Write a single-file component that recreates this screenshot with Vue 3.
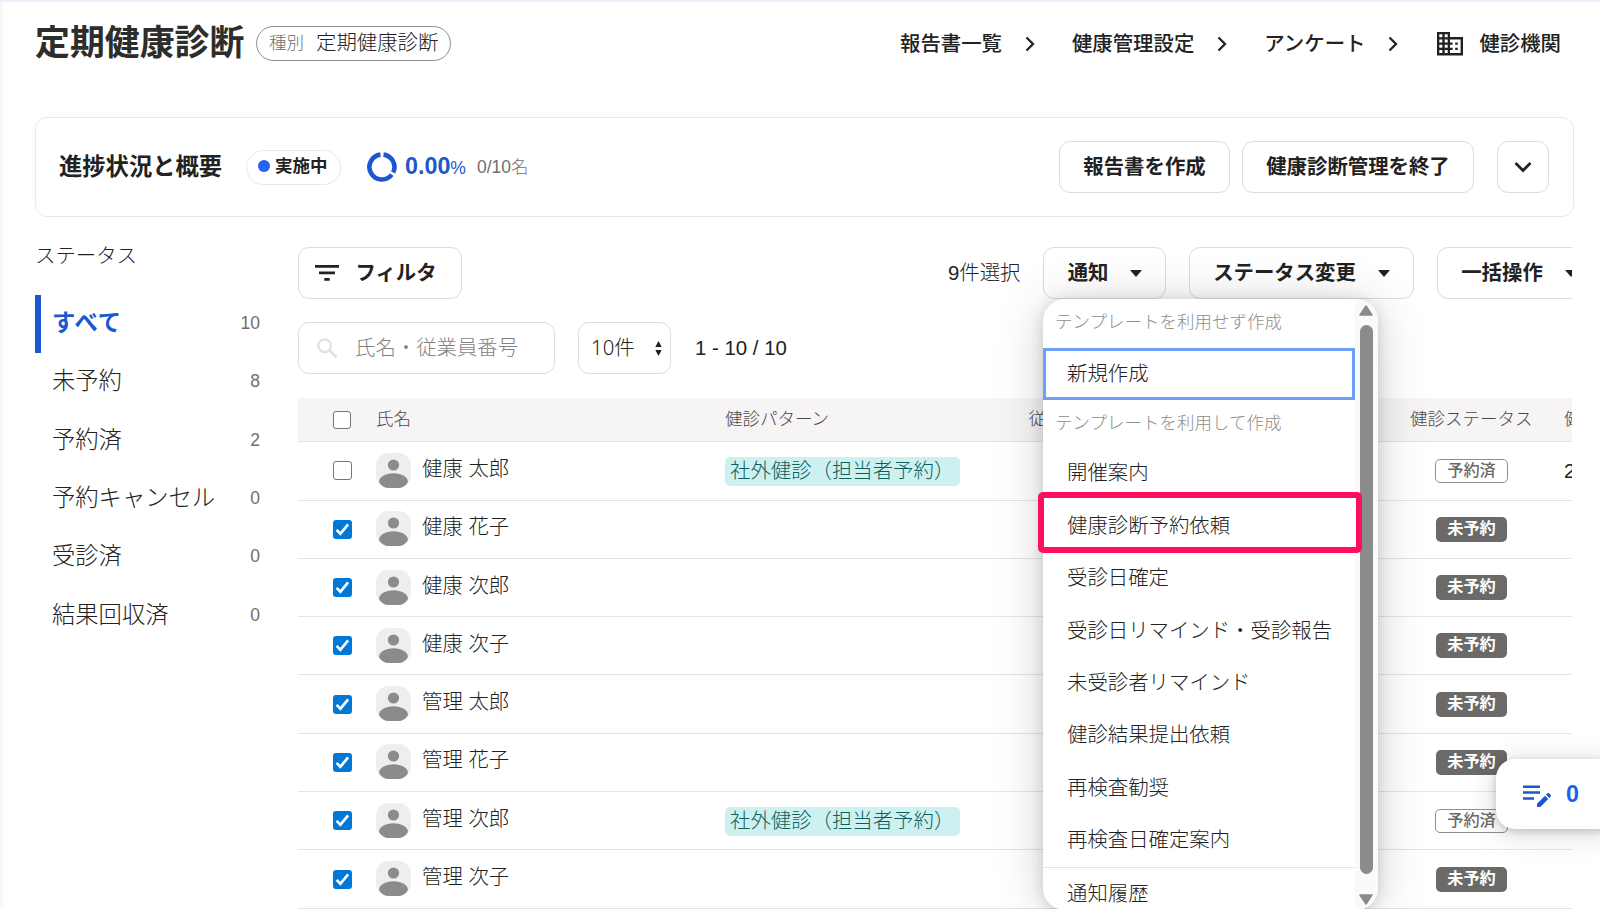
<script setup>
const nav = ['報告書一覧', '健康管理設定', 'アンケート']
const statuses = [
  { name: 'すべて', count: 10, active: true },
  { name: '未予約', count: 8 },
  { name: '予約済', count: 2 },
  { name: '予約キャンセル', count: 0 },
  { name: '受診済', count: 0 },
  { name: '結果回収済', count: 0 },
]
const pattern = '社外健診（担当者予約）'
const rows = [
  { name: '健康 太郎', checked: false, pattern, status: '予約済', date: '2' },
  { name: '健康 花子', checked: true, status: '未予約' },
  { name: '健康 次郎', checked: true, status: '未予約' },
  { name: '健康 次子', checked: true, status: '未予約' },
  { name: '管理 太郎', checked: true, status: '未予約' },
  { name: '管理 花子', checked: true, status: '未予約' },
  { name: '管理 次郎', checked: true, pattern, status: '予約済' },
  { name: '管理 次子', checked: true, status: '未予約' },
]
const templates = [
  '開催案内',
  '健康診断予約依頼',
  '受診日確定',
  '受診日リマインド・受診報告',
  '未受診者リマインド',
  '健診結果提出依頼',
  '再検査勧奨',
  '再検査日確定案内',
]
</script>

<template>
  <div class="page">
    <header class="header">
      <h1>定期健康診断</h1>
      <div class="kind"><span class="kind-label">種別</span><span>定期健康診断</span></div>
      <nav class="nav">
        <a v-for="n in nav" :key="n" class="nav-item">
          <span>{{ n }}</span>
          <svg width="10" height="16" viewBox="0 0 10 16"><path d="M1.5 1.5 8 8l-6.500 6.500" fill="none" stroke="#222" stroke-width="2.300" /></svg>
        </a>
        <a class="nav-item clinic">
          <svg width="26" height="24" viewBox="0 0 26 24">
            <path fill="#222" fill-rule="evenodd" d="M0 0h13v5h13v18.500H0zM2.300 2.300v3h3v-3zm5.400 0v3h3v-3zM2.300 7.400v3h3v-3zm5.400 0v3h3v-3zM2.300 12.700v3h3v-3zm5.400 0v3h3v-3zM2.300 18v3h3v-3zm5.400 0v3h3v-3zM13 7.400v3h2.600v2.300H13V15.700h2.600V18H13v3h10.600V7.400zM18.200 10.400h2.600v2.300h-2.600zm0 5.300h2.600V18h-2.600z" />
          </svg>
          <span>健診機関</span>
        </a>
      </nav>
    </header>

    <section class="summary">
      <h2>進捗状況と概要</h2>
      <div class="state"><i class="dot"></i>実施中</div>
      <svg class="donut" width="30" height="30" viewBox="0 0 30 30">
        <g fill="none" stroke="#1d57d0" stroke-width="4.600">
          <path d="M16.500 2.600A12.500 12.500 0 0 1 26.200 20.400" />
          <path d="M24.800 22.700A12.500 12.500 0 1 1 13.500 2.600" />
        </g>
      </svg>
      <div class="rate"><b>0.00</b><span>%</span></div>
      <div class="people">0/10名</div>
      <div class="actions">
        <button class="btn report">報告書を作成</button>
        <button class="btn finish">健康診断管理を終了</button>
        <button class="btn toggle">
          <svg width="18" height="12" viewBox="0 0 18 12"><path d="M1.500 2 9 9.500 16.500 2" fill="none" stroke="#222" stroke-width="2.700" /></svg>
        </button>
      </div>
    </section>

    <div class="body">
      <aside class="side">
        <div class="side-title">ステータス</div>
        <div v-for="s in statuses" :key="s.name" class="side-item" :class="{ active: s.active }">
          <span>{{ s.name }}</span><span class="count">{{ s.count }}</span>
        </div>
      </aside>

      <main class="main">
        <div class="toolbar">
          <button class="btn filter">
            <svg width="24" height="16" viewBox="0 0 24 16"><path d="M0 0h24v2.700H0zM4 6.600h16v2.700H4zM9.300 13h5.400v2.700H9.300z" fill="#222" /></svg>
            フィルタ
          </button>
          <span class="selected">9件選択</span>
          <button class="btn notify">通知<i class="caret"></i></button>
          <button class="btn change">ステータス変更<i class="caret"></i></button>
          <button class="btn bulk">一括操作<i class="caret"></i></button>
        </div>

        <div class="search-row">
          <div class="search">
            <svg width="21" height="21" viewBox="0 0 21 21"><g fill="none" stroke="#e2e2e0" stroke-width="2.300"><circle cx="7.700" cy="7.700" r="6.300" /><path d="m12.300 12.300 7.300 7.300" stroke-width="2.800" /></g></svg>
            <span>氏名・従業員番号</span>
          </div>
          <div class="select">
            <span>10件</span>
            <svg width="7" height="15" viewBox="0 0 7 15"><path d="M3.500 0 6.700 6H.300zM3.500 15 .300 9h6.400z" fill="#222" /></svg>
          </div>
          <span class="range">1 - 10 / 10</span>
        </div>

        <div class="table">
          <div class="row head">
            <i class="box small"></i>
            <span class="c-name">氏名</span>
            <span class="c-pattern">健診パターン</span>
            <span class="c-number">従業員番号</span>
            <span class="c-status">健診ステータス</span>
            <span class="c-date">健診日</span>
          </div>
          <div v-for="r in rows" :key="r.name" class="row">
            <i class="box" :class="{ checked: r.checked }">
              <svg v-if="r.checked" width="19" height="19" viewBox="0 0 19 19"><path d="m3.600 9.900 3.800 3.900 7.700-9.400" fill="none" stroke="#fff" stroke-width="2.700" /></svg>
            </i>
            <span class="c-name">
              <svg class="avatar" width="35" height="35" viewBox="0 0 35 35">
                <rect width="35" height="35" rx="12.500" fill="#efeeec" />
                <circle cx="17.500" cy="12" r="5.600" fill="#8c8b89" />
                <path d="M3 29c0-5 6.500-8.700 14.500-8.700S32 24 32 29c-2.500 4-5.500 6-10 6h-9c-4.500 0-7.500-2-10-6z" fill="#8c8b89" />
              </svg>
              <span class="person">{{ r.name }}</span>
            </span>
            <span class="c-pattern"><span v-if="r.pattern" class="chip">{{ r.pattern }}</span></span>
            <span class="c-number"></span>
            <span class="c-status"><span class="badge" :class="{ outline: r.status === '予約済' }">{{ r.status }}</span></span>
            <span class="c-date">{{ r.date }}</span>
          </div>
        </div>
      </main>
    </div>

    <div class="menu">
      <div class="menu-list">
        <div class="menu-label">テンプレートを利用せず作成</div>
        <div class="menu-item focus">新規作成</div>
        <div class="menu-label second">テンプレートを利用して作成</div>
        <div v-for="t in templates" :key="t" class="menu-item">{{ t }}</div>
        <div class="menu-item history">通知履歴</div>
      </div>
      <div class="scrollbar">
        <svg width="14" height="11" viewBox="0 0 14 11"><path d="M7 1 13 10H1z" fill="#8b8b8b" stroke="#8b8b8b" stroke-width="1.500" stroke-linejoin="round" /></svg>
        <i class="thumb"></i>
        <svg width="14" height="11" viewBox="0 0 14 11"><path d="M7 10 13 1H1z" fill="#8b8b8b" stroke="#8b8b8b" stroke-width="1.500" stroke-linejoin="round" /></svg>
      </div>
    </div>
    <div class="highlight"></div>

    <div class="float">
      <svg width="28" height="23" viewBox="0 0 28 23">
        <path fill="#1d57d0" d="M0 .500h17v2.500H0zM0 6.300h17v2.500H0zM0 12.200h11v2.500H0zM14 18.700l8-8 3.300 3.300-8 8H14zM23 9.700l1.400-1.400a1.200 1.200 0 0 1 1.700 0l1.600 1.600a1.200 1.200 0 0 1 0 1.700L26.300 13z" />
      </svg>
      <b>0</b>
    </div>
  </div>
</template>

<style>
html,
body {
  margin: 0;
  background: #fff;
  overflow: hidden;
}
</style>

<style scoped>
* {
  box-sizing: border-box;
}
.page {
  position: relative;
  width: 1600px;
  height: 909px;
  overflow: hidden;
  background: linear-gradient(90deg, #f6f6f6, #fff 5px);
  border-top: 2px solid #e8f2ff;
  padding-left: 35px;
  font-family: 'Liberation Sans', 'Noto Sans CJK JP', sans-serif;
  font-size: 20.4px;
  font-weight: 300;
  line-height: 30px;
  color: #222;
  white-space: nowrap;
}
b {
  font-weight: 700;
}
svg {
  display: block;
  flex: none;
}
.header {
  display: flex;
  align-items: center;
  height: 83px;
  padding-right: 39px;
}
h1 {
  margin: -2px 0 0;
  width: 221px;
  font-size: 34.900px;
  line-height: 50px;
  font-weight: 700;
  color: #2d2d2b;
}
.kind {
  display: flex;
  align-items: center;
  gap: 12px;
  width: 195px;
  height: 35px;
  margin-top: -1px;
  padding-left: 12px;
  border: 1px solid #8f8e8c;
  border-radius: 18px;
}
.kind-label {
  font-size: 17.500px;
  color: #706f6d;
}
.nav {
  display: flex;
  align-items: center;
  margin-left: auto;
  font-weight: 500;
}
.nav-item {
  display: flex;
  align-items: center;
  gap: 23px;
  margin-right: 37px;
}
.nav-item:nth-child(3) {
  margin-right: 39px;
}
.nav-item.clinic {
  gap: 16px;
  margin: 0;
}
.summary {
  display: flex;
  align-items: center;
  width: 1539px;
  height: 100px;
  margin-top: 32px;
  padding: 0 24px 0 23px;
  border: 1px solid #e9e9e9;
  border-radius: 12px;
}
h2 {
  margin: 0;
  width: 187px;
  font-size: 23.300px;
  font-weight: 700;
}
.state {
  display: flex;
  align-items: center;
  gap: 5px;
  width: 95px;
  height: 35px;
  padding: 0 0 2px 11px;
  border: 1px solid #e9e9e9;
  border-radius: 18px;
  font-size: 17.500px;
  font-weight: 700;
}
.dot {
  width: 12px;
  height: 12px;
  border-radius: 50%;
  background: #2464f0;
}
.donut {
  margin-left: 26px;
}
.rate {
  margin-left: 8px;
  color: #1d57d0;
}
.rate b {
  font-size: 23.300px;
}
.rate span {
  font-size: 17.500px;
}
.people {
  margin-left: 11px;
  font-size: 17.500px;
  color: #706f6d;
}
.actions {
  display: flex;
  margin-left: auto;
}
.btn {
  display: flex;
  align-items: center;
  justify-content: center;
  flex: none;
  height: 52px;
  padding: 0;
  border: 1px solid #dcdcdc;
  border-radius: 11px;
  background: #fff;
  font: inherit;
  font-weight: 700;
  color: #222;
}
.report {
  width: 171px;
}
.finish {
  width: 232px;
  margin-left: 12px;
}
.toggle {
  width: 52px;
  margin-left: 23px;
}
.body {
  display: flex;
}
.side {
  width: 263px;
  padding-top: 24px;
}
.side-title {
  margin-bottom: 24px;
}
.side-item {
  display: flex;
  align-items: center;
  justify-content: space-between;
  width: 225px;
  height: 58.300px;
  padding: 0 0 2px 17px;
  font-size: 23.300px;
}
.side-item.active {
  border-left: 6px solid #1d57d0;
  padding-left: 11px;
  font-weight: 700;
  letter-spacing: 0.800px;
  color: #1d57d0;
}
.count {
  font-size: 17.500px;
  font-weight: 400;
  letter-spacing: 0;
  color: #706f6d;
}
.main {
  width: 1274px;
  padding-top: 30px;
  overflow: hidden;
}
.toolbar {
  display: flex;
  align-items: center;
}
.filter {
  width: 164px;
  gap: 16px;
  padding-right: 8px;
}
.selected {
  margin-left: 486px;
}
.caret {
  border: 6.500px solid transparent;
  border-top: 7px solid #222;
  border-bottom: 0;
  margin-left: 22px;
}
.notify {
  width: 123px;
  margin-left: 22px;
  padding-left: 2px;
}
.change {
  width: 225px;
  margin-left: 23px;
  padding-left: 1px;
}
.bulk {
  width: 164px;
  margin-left: 23px;
  padding-left: 1px;
}
.search-row {
  display: flex;
  align-items: center;
  margin-top: 23.400px;
}
.search,
.select {
  display: flex;
  align-items: center;
  height: 52px;
  border: 1px solid #dcdcdc;
  border-radius: 11px;
}
.search {
  width: 257px;
  padding-left: 18px;
  gap: 17px;
  color: #83827f;
}
.select {
  width: 93px;
  margin-left: 23px;
  padding: 0 8px 0 12px;
  justify-content: space-between;
  font-family: 'Noto Sans', 'Noto Sans CJK JP', sans-serif;
}
.select span {
  margin-top: -2px;
}
.range {
  margin-left: 24px;
}
.table {
  margin-top: 23.400px;
}
.row {
  display: flex;
  align-items: center;
  height: 58.300px;
  padding-left: 34.500px;
  border-bottom: 1px solid #e4e4e4;
}
.row.head {
  height: 44.500px;
  background: #f6f4f5;
  font-size: 17.500px;
  color: #4a4947;
}
.row > * {
  flex: none;
}
.head > span {
  margin-top: -2px;
}
.box {
  width: 19px;
  height: 19px;
  margin-right: 24.500px;
  border: 1.500px solid #777;
  border-radius: 3px;
  background: #fff;
}
.box.small {
  width: 18px;
  height: 18px;
  margin-right: 25.500px;
}
.box.checked {
  border: 0;
  background: #0078d7;
}
.c-name {
  display: flex;
  align-items: center;
  gap: 11px;
  width: 349px;
}
.avatar {
  margin-top: -1px;
}
.person {
  margin-top: -4px;
}
.c-pattern {
  width: 303.500px;
}
.chip {
  display: inline-block;
  height: 29px;
  padding: 0 6px 0 5px;
  border-radius: 5px;
  background: #cdf0f0;
  color: #0d5f5c;
  line-height: 28px;
  vertical-align: middle;
}
.c-number {
  width: 381.500px;
}
.c-status {
  display: flex;
  width: 154px;
}
.badge {
  width: 71px;
  height: 25px;
  margin-left: 26px;
  border-radius: 5px;
  background: #6b6a68;
  color: #fff;
  font-size: 16.200px;
  font-weight: 700;
  line-height: 23px;
  text-align: center;
}
.badge.outline {
  width: 73px;
  height: 24px;
  margin-left: 25px;
  border: 1px solid #918f8d;
  background: #fff;
  color: #6b6a68;
  font-weight: 500;
  line-height: 20px;
}
.menu {
  position: absolute;
  left: 1043px;
  top: 297px;
  display: flex;
  width: 335px;
  height: 611px;
  overflow: hidden;
  border-radius: 22px;
  background: #fff;
  box-shadow: 0 4px 50px rgba(0, 0, 0, 0.18), 0 2px 14px rgba(0, 0, 0, 0.14);
}
.menu-list {
  width: 312px;
}
.menu-label {
  height: 49px;
  padding: 8px 0 0 12px;
  font-size: 17.500px;
  color: #8f8e8c;
}
.menu-label.second {
  height: 47px;
}
.menu-item {
  height: 52.400px;
  padding-left: 24px;
  line-height: 52px;
}
.menu-item.focus {
  border: 3px solid #6b9ff8;
  padding-left: 21px;
  line-height: 47px;
}
.menu-item.history {
  border-top: 1px solid #e4e4e4;
}
.scrollbar {
  display: flex;
  flex-direction: column;
  align-items: center;
  gap: 9px;
  width: 23px;
  padding: 6px 1px 0 0;
  background: #fafafa;
}
.thumb {
  width: 13px;
  height: 549px;
  border-radius: 7px;
  background: #8b8b8b;
}
.scrollbar svg:last-child {
  margin-top: 11px;
}
.highlight {
  position: absolute;
  left: 1038px;
  top: 490px;
  width: 324px;
  height: 61px;
  border: 6px solid #ff0f5b;
  border-radius: 5px;
}
.float {
  position: absolute;
  left: 1496px;
  top: 757px;
  display: flex;
  align-items: center;
  gap: 15px;
  width: 120px;
  height: 70px;
  padding-left: 27px;
  border-radius: 19px;
  background: #fff;
  box-shadow: 0 4px 30px rgba(0, 0, 0, 0.16), 0 2px 8px rgba(0, 0, 0, 0.18);
}
.float svg {
  margin-top: 4px;
}
.float b {
  font-size: 23.300px;
  color: #1a5ff0;
}
</style>
